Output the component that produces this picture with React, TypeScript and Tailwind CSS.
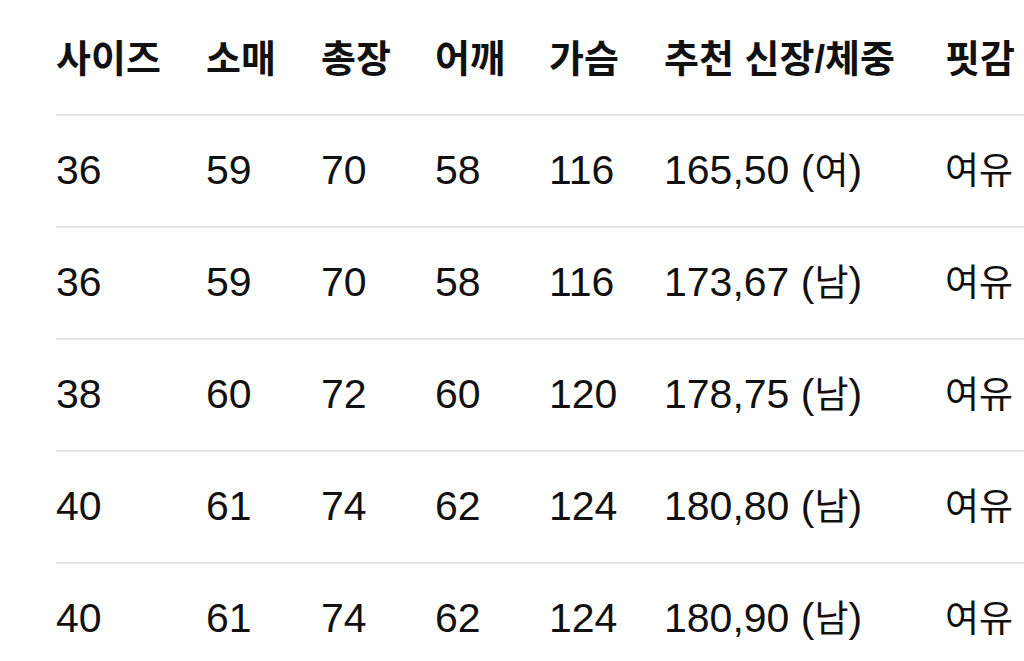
const headers = ["사이즈", "소매", "총장", "어깨", "가슴", "추천 신장/체중", "핏감"];

const rows = [
  ["36", "59", "70", "58", "116", "165,50 (여)", "여유"],
  ["36", "59", "70", "58", "116", "173,67 (남)", "여유"],
  ["38", "60", "72", "60", "120", "178,75 (남)", "여유"],
  ["40", "61", "74", "62", "124", "180,80 (남)", "여유"],
  ["40", "61", "74", "62", "124", "180,90 (남)", "여유"],
];

const cols = "grid grid-cols-[150px_115px_114px_114px_115px_281px_200px]";

// hangul glyphs run smaller than the digits in the source font
function Cell({ text }: { text: string }) {
  const parts = text.split(/([가-힣]+)/);
  return (
    <div className="whitespace-nowrap text-[41px]">
      {parts.map((p, i) =>
        /[가-힣]/.test(p) ? (
          <span key={i} className="text-[37px]">
            {p}
          </span>
        ) : (
          <span key={i}>{p}</span>
        )
      )}
    </div>
  );
}

export default function App() {
  return (
    <div
      className="min-h-screen w-full overflow-hidden bg-white pl-[56px] text-[#111]"
      style={{ fontFamily: '"Liberation Sans", "Noto Sans CJK KR", sans-serif' }}
    >
      <div className="w-[1200px]">
        <div className={`${cols} h-[116px] items-center border-b-2 border-[#e4e4e4] pt-1`}>
          {headers.map((h) => (
            <div key={h} className="whitespace-nowrap text-[38px] font-semibold">
              {h}
            </div>
          ))}
        </div>
        {rows.map((r, i) => (
          <div key={i} className={`${cols} h-[112px] items-center border-b-2 border-[#e4e4e4]`}>
            {r.map((c, j) => (
              <Cell key={j} text={c} />
            ))}
          </div>
        ))}
      </div>
    </div>
  );
}
